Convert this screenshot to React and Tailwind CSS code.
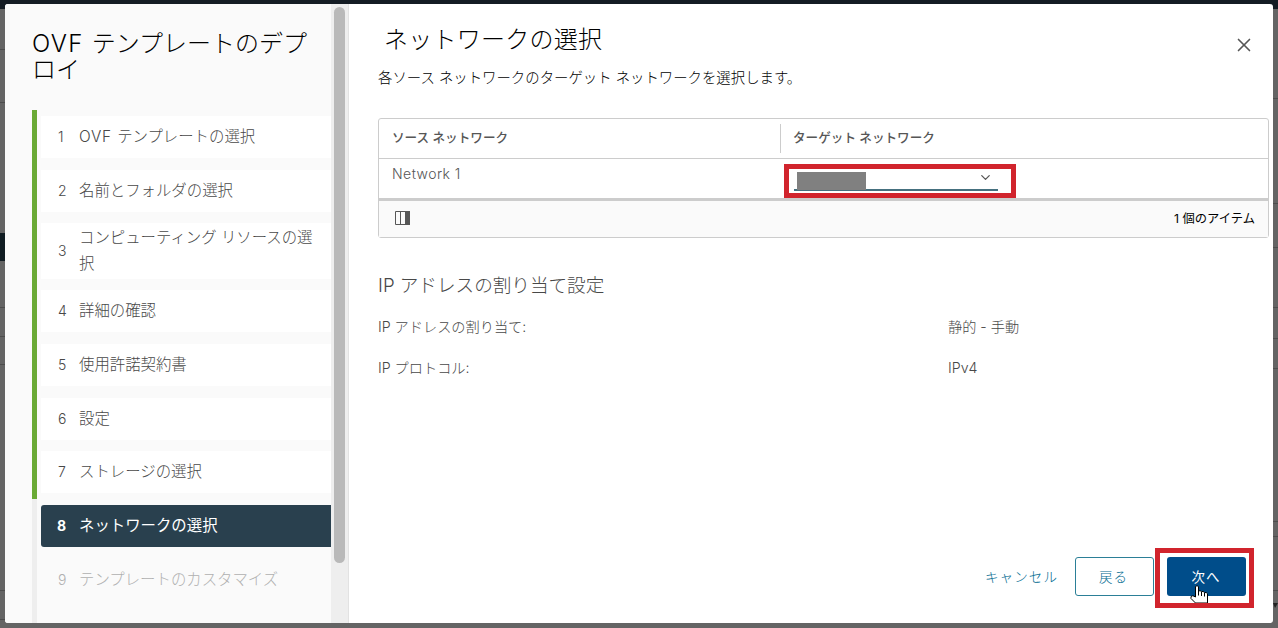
import { X, ChevronDown } from 'lucide-react';

const steps = [
  { id: 1, prefix: 'OVF', label: 'テンプレートの選択' },
  { id: 2, label: '名前とフォルダの選択' },
  { id: 3, label: 'コンピューティング リソースの選択', tall: true },
  { id: 4, label: '詳細の確認' },
  { id: 5, label: '使用許諾契約書' },
  { id: 6, label: '設定' },
  { id: 7, label: 'ストレージの選択' },
  { id: 8, label: 'ネットワークの選択', state: 'active' },
  { id: 9, label: 'テンプレートのカスタマイズ', state: 'disabled' },
];

const leftLines = [49, 102, 307, 336, 364, 590, 619];
const rightLines = [98, 203, 247, 307, 338, 368, 521, 536, 590];

function Step({ step }) {
  const active = step.state === 'active';
  const disabled = step.state === 'disabled';
  const tone = active
    ? 'bg-[#29404e] text-white rounded-l-[3px]'
    : disabled
      ? 'text-[#b0b0b0]'
      : 'bg-white text-[#484848]';
  return (
    <li className={`flex items-center pl-[16px] pr-2 ${step.tall ? 'h-[55.2px]' : 'h-[42px]'} ${tone}`}>
      <span className={`w-[22px] shrink-0 pb-px text-[14px] ${active ? 'font-bold' : 'pl-px'}`}>{step.id}</span>
      <span className={`text-[15.4px] leading-[26px] ${active ? 'font-normal' : ''}`}>
        {step.prefix && <span className="tracking-[0.8px]">{step.prefix} </span>}
        {step.label}
      </span>
    </li>
  );
}

function Sidebar() {
  return (
    <aside className="flex w-[344px] shrink-0 bg-[#fafafa]">
      <div className="w-[326px] pl-[27px]">
        <h1 className="h-[106px] pt-[27px] text-[24px] leading-[26.4px] text-black">
          <span className="tracking-[1.3px]">OVF </span>
          テンプレートのデプ
          <br />
          ロイ
        </h1>
        <div className="flex">
          <div className="h-[513px] w-[5px] bg-[#eeeeee]">
            <div className="h-[389px] w-[5px] bg-[#6aaa35]" />
          </div>
          <ol className="ml-1 mt-[6px] flex flex-1 flex-col gap-[11.7px]">
            {steps.map((s) => (
              <Step key={s.id} step={s} />
            ))}
          </ol>
        </div>
      </div>
      {/* scrollbar */}
      <div className="w-[18px] border-r border-[#e2e2e2] bg-[#eeeeee] pl-[3px] pt-[3px]">
        <div className="h-[556px] w-[11px] rounded-full bg-[#b9b9b9]" />
      </div>
    </aside>
  );
}

function NetworkTable() {
  return (
    <div className="mt-[31px] h-[120px] w-[891px] rounded-[3px] border border-[#cccccc] text-[#565656]">
      <div className="flex h-[40px] items-center border-b border-[#cccccc] text-[12.6px] font-medium">
        <div className="w-[401px] pl-[13px]">ソース ネットワーク</div>
        <div className="flex h-[29px] items-center border-l border-[#cccccc] pl-[12px]">ターゲット ネットワーク</div>
      </div>
      <div className="flex h-[42px] border-b-[3px] border-[#cccccc]">
        <div className="w-[405px] pl-[13px] pt-[5px] text-[14px] leading-5 tracking-[0.45px]">Network 1</div>
        <div className="relative z-10 mt-[5px] h-[34px] w-[232px] border-[5px] border-[#d1242d] bg-white pl-[5px] pt-[3px]">
          <div className="flex h-[19px] w-[204px] justify-between border-b-2 border-[#45707f] pl-[3px]">
            <div className="h-[18px] w-[69px] bg-[#808080]" />
            <ChevronDown className="mr-[5px] mt-[-2px] size-[15px]" strokeWidth={2} />
          </div>
        </div>
      </div>
      <div className="flex h-[36px] items-center justify-between bg-[#fafafa] pl-4 pr-[13px]">
        <svg className="mb-[2px]" width="15" height="14" viewBox="0 0 15 14" fill="none">
          <path d="M.5 .5H14.5V13.5H.5ZM5.5 .5V13.5" stroke="#565656" />
          <path d="M10 0H15V14H10Z" fill="#565656" />
        </svg>
        <span className="text-[12.3px] font-normal text-black">1 個のアイテム</span>
      </div>
    </div>
  );
}

function HandCursor() {
  return (
    <svg className="absolute left-[30px] top-[32px]" width="18" height="18" viewBox="0 0 18 18">
      <path
        d="M5.5 12V1.5q1.5-1.6 3 0V6q1.7-.9 3 .6 1.8-.7 3 .9 2-.4 3 1.2V18H5.5L1 13.5q-.9-2.6 1.8-2.8Z"
        fill="#fff"
        stroke="#000"
      />
      <path d="M8.5 6v4.5M11.5 7v4M14.5 8v3.5" stroke="#000" />
    </svg>
  );
}

function Footer() {
  return (
    <footer className="mt-auto flex h-[75px] items-start justify-end pr-[19px] text-[13.5px] tracking-[1.1px]">
      <button className="mr-[17px] mt-[9px] h-[39px] pt-[2px] text-[#006a90]">キャンセル</button>
      <button className="mt-[9px] h-[39px] w-[79px] rounded-[3px] border border-[#2b7f97] pr-[2px] pt-[2px] text-[#006a90]">
        戻る
      </button>
      <div className="relative ml-px h-[60px] w-[99px] border-[5px] border-[#d1242d] p-[4px_3px_6px_7px]">
        <button className="h-[39px] w-[79px] rounded-[3px] bg-[#004d8a] pr-px pt-[2px] font-normal text-white">
          次へ
        </button>
        <HandCursor />
      </div>
    </footer>
  );
}

export default function App() {
  return (
    <div
      lang="ja"
      className="relative h-[628px] w-[1278px] overflow-hidden bg-[#646464] pl-[5px] pt-[4px] font-[Inter,'Noto_Sans_CJK_JP',sans-serif] font-light"
    >
      {/* dimmed page behind the dialog */}
      <div className="absolute inset-x-0 top-0 h-[9px] bg-[#141c24]" />
      <div className="absolute left-0 top-[233px] h-[28px] w-[6px] bg-[#101c22]" />
      {leftLines.map((y) => (
        <div key={y} className="absolute left-0 h-px w-[5px] bg-[#4d4d4d]" style={{ top: y }} />
      ))}
      {rightLines.map((y) => (
        <div key={y} className="absolute right-0 h-px w-[5px] bg-[#4d4d4d]" style={{ top: y }} />
      ))}
      <svg className="absolute right-0 top-[603px]" width="5" height="5" viewBox="0 0 5 5">
        <path d="M0 0H5L2 5Z" fill="#222" />
      </svg>

      <div className="relative flex h-[619px] w-[1268px] overflow-hidden rounded-[3px] bg-white">
        <Sidebar />
        <main className="flex flex-1 flex-col pl-[29px]">
          <div className="flex h-[62px] items-start justify-between pr-[18px]">
            <h2 className="pl-[6px] pt-[20px] text-[24px] leading-8 tracking-[0.25px] text-black">ネットワークの選択</h2>
            <X className="mt-[30px] size-[22px] text-[#565656]" strokeWidth={1.8} />
          </div>
          <p className="h-[21px] text-[14.4px] leading-[23px] text-black">
            各ソース ネットワークのターゲット ネットワークを選択します。
          </p>
          <NetworkTable />
          <h3 className="mt-[33px] text-[18.6px] leading-7 text-[#484848]">IP アドレスの割り当て設定</h3>
          <dl className="mt-[16px] grid grid-cols-[570px_1fr] gap-y-[17px] text-[14.2px] leading-6 text-[#484848]">
            <dt>IP アドレスの割り当て:</dt>
            <dd>静的 - 手動</dd>
            <dt>IP プロトコル:</dt>
            <dd>IPv4</dd>
          </dl>
          <Footer />
        </main>
      </div>
    </div>
  );
}
